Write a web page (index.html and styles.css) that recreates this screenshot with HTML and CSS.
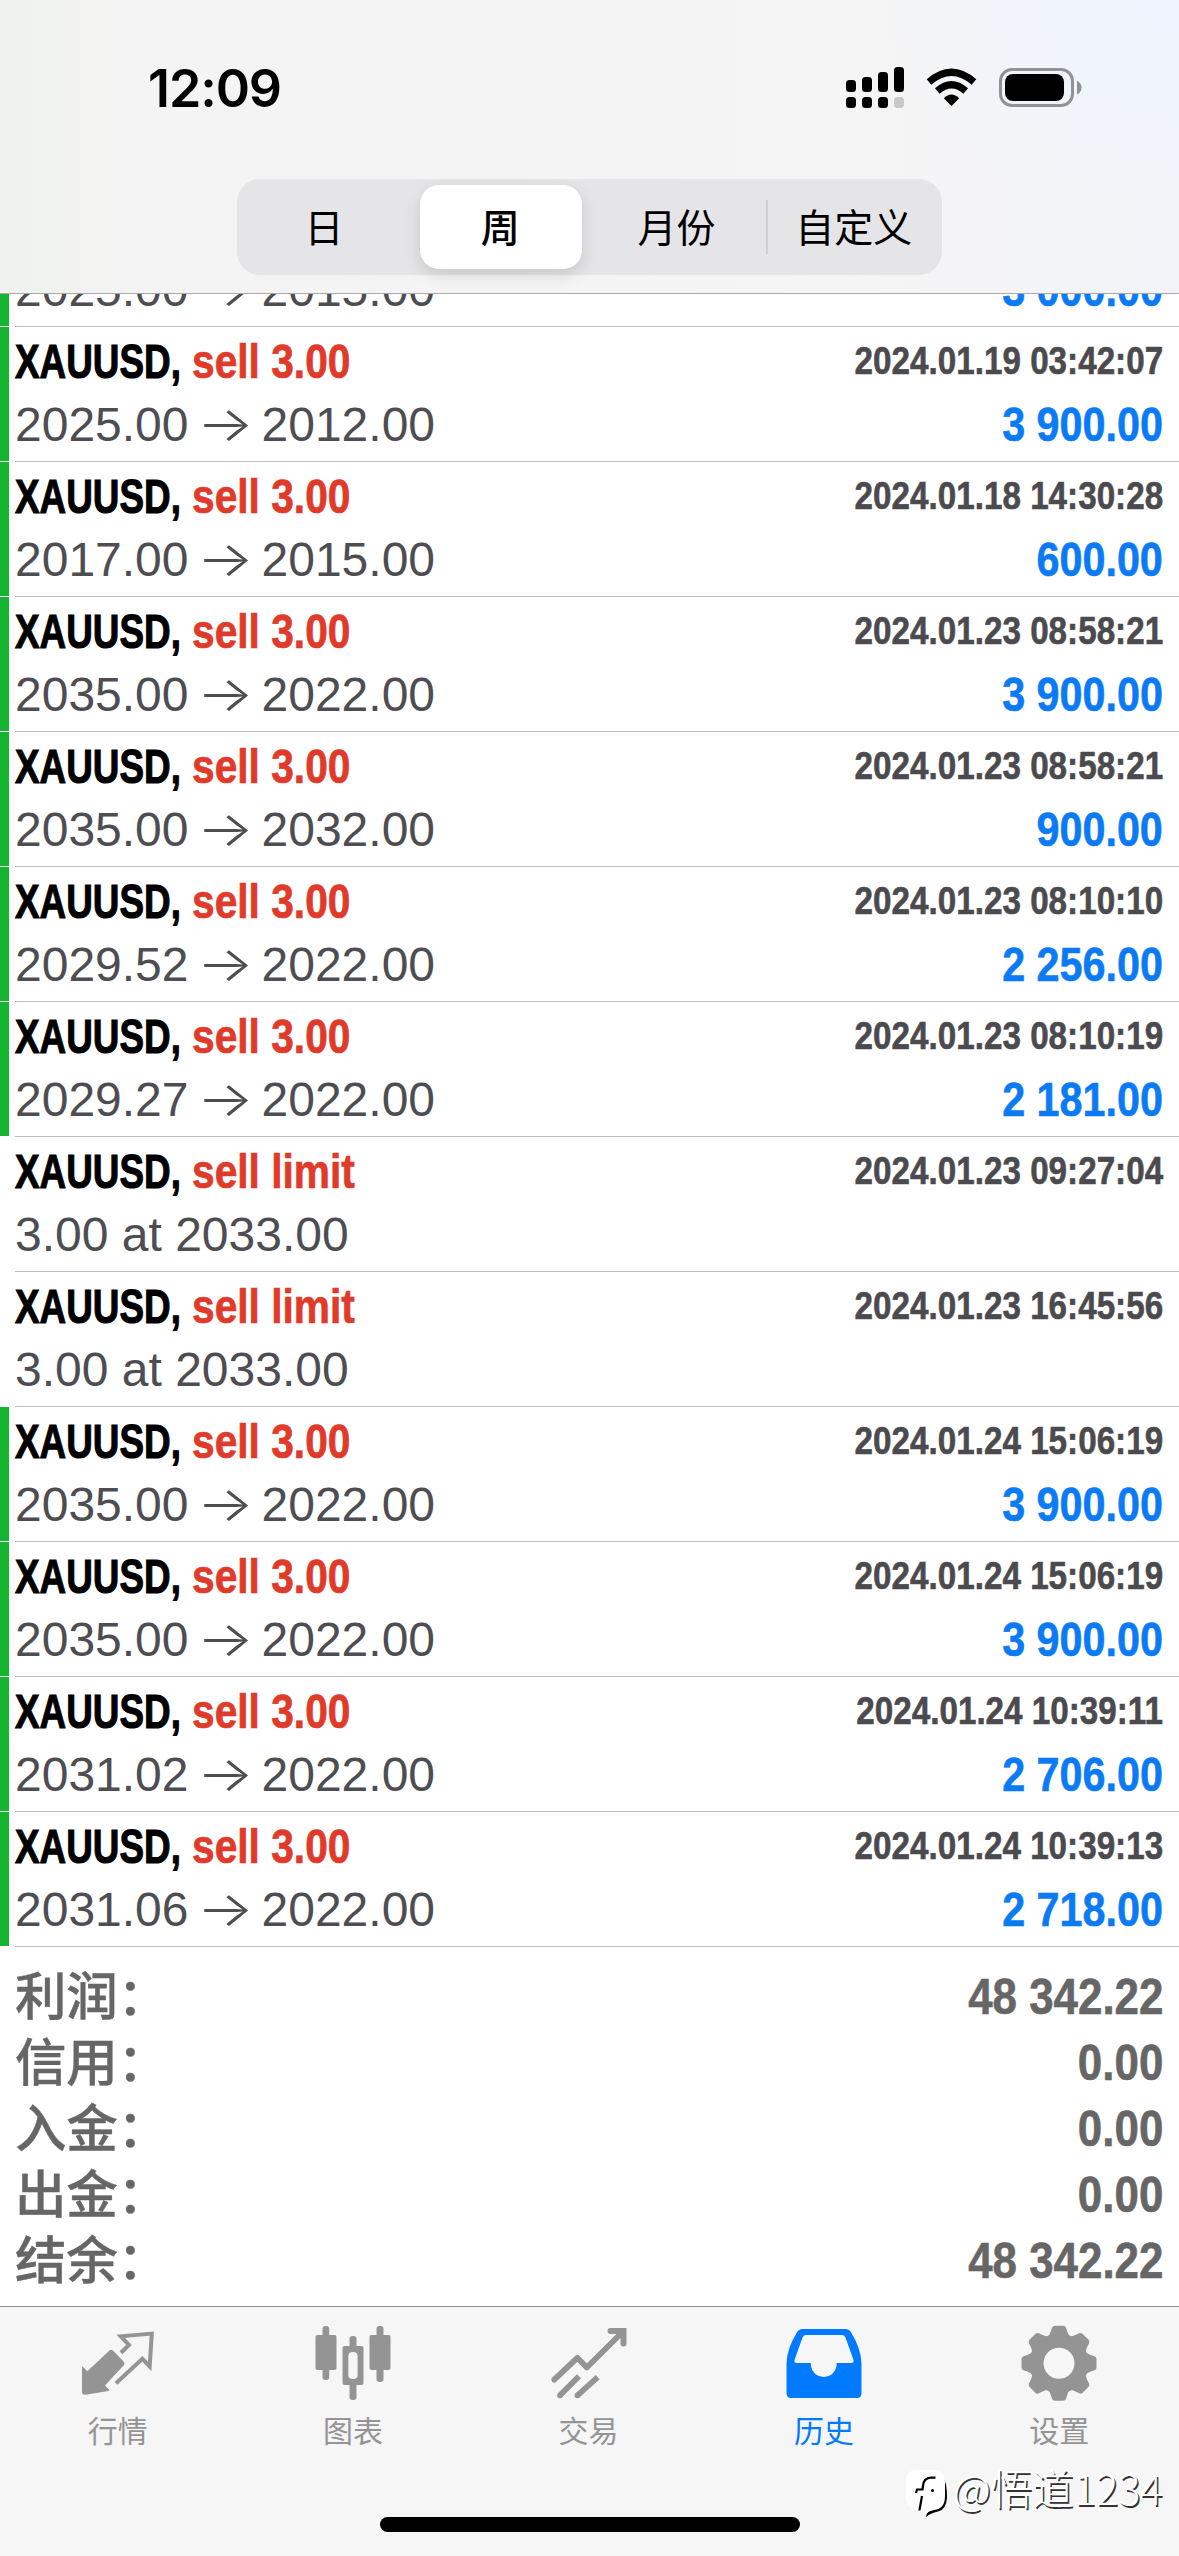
FILE: index.html
```html
<!DOCTYPE html>
<html lang="zh-CN">
<head>
<meta charset="utf-8">
<title>历史</title>
<link rel="stylesheet" href="styles.css">
</head>
<body>
<div class="screen">
  <header class="header">
    <div class="status">
      <span class="clock">12:09</span>
      <svg class="status-icons" width="240" height="50" viewBox="843 62 240 50">
        <g fill="#000">
          <rect x="846" y="80" width="10" height="12" rx="3.5"/>
          <rect x="862" y="77" width="10" height="15" rx="3.5"/>
          <rect x="878" y="72" width="10" height="20" rx="3.5"/>
          <rect x="894" y="67" width="10" height="25" rx="3.5"/>
          <rect x="846" y="97" width="10" height="11" rx="3.5"/>
          <rect x="862" y="97" width="10" height="11" rx="3.5"/>
          <rect x="878" y="97" width="10" height="11" rx="3.5"/>
          <path d="M951.500 106 L943.800 98.300 Q951.500 90.800 959.200 98.300 Z"/>
        </g>
        <rect x="894" y="97" width="10" height="11" rx="3.500" fill="#c8c8ca"/>
        <g fill="none" stroke="#000" stroke-width="7">
          <path d="M929 82 Q951.500 62.500 974 82"/>
          <path d="M937.300 91 Q951.500 78.500 965.700 91"/>
        </g>
        <rect x="1000.500" y="69.500" width="72" height="36" rx="11.500" fill="none" stroke="#929296" stroke-width="3"/>
        <rect x="1005" y="74" width="59" height="27" rx="8" fill="#000"/>
        <path d="M1077 80.500 q4.500 2.500 4.500 7 t-4.500 7 z" fill="#929296"/>
      </svg>
    </div>
    <nav class="segments">
      <span class="segment">日</span>
      <span class="segment selected">周</span>
      <span class="segment">月份</span>
      <span class="segment divided">自定义</span>
    </nav>
  </header>

  <main class="list">
    <div class="row filled clipped"><div class="cell">
      <div class="line second"><span class="price">2025.00<i class="arrow">→</i>2015.00</span><b class="profit">3 000.00</b></div>
    </div></div>
    <div class="row filled"><div class="cell">
      <div class="line"><b class="name">XAUUSD,</b><b class="side">sell 3.00</b><b class="date">2024.01.19 03:42:07</b></div>
      <div class="line second"><span class="price">2025.00<i class="arrow">→</i>2012.00</span><b class="profit">3 900.00</b></div>
    </div></div>
    <div class="row filled"><div class="cell">
      <div class="line"><b class="name">XAUUSD,</b><b class="side">sell 3.00</b><b class="date">2024.01.18 14:30:28</b></div>
      <div class="line second"><span class="price">2017.00<i class="arrow">→</i>2015.00</span><b class="profit">600.00</b></div>
    </div></div>
    <div class="row filled"><div class="cell">
      <div class="line"><b class="name">XAUUSD,</b><b class="side">sell 3.00</b><b class="date">2024.01.23 08:58:21</b></div>
      <div class="line second"><span class="price">2035.00<i class="arrow">→</i>2022.00</span><b class="profit">3 900.00</b></div>
    </div></div>
    <div class="row filled"><div class="cell">
      <div class="line"><b class="name">XAUUSD,</b><b class="side">sell 3.00</b><b class="date">2024.01.23 08:58:21</b></div>
      <div class="line second"><span class="price">2035.00<i class="arrow">→</i>2032.00</span><b class="profit">900.00</b></div>
    </div></div>
    <div class="row filled"><div class="cell">
      <div class="line"><b class="name">XAUUSD,</b><b class="side">sell 3.00</b><b class="date">2024.01.23 08:10:10</b></div>
      <div class="line second"><span class="price">2029.52<i class="arrow">→</i>2022.00</span><b class="profit">2 256.00</b></div>
    </div></div>
    <div class="row filled"><div class="cell">
      <div class="line"><b class="name">XAUUSD,</b><b class="side">sell 3.00</b><b class="date">2024.01.23 08:10:19</b></div>
      <div class="line second"><span class="price">2029.27<i class="arrow">→</i>2022.00</span><b class="profit">2 181.00</b></div>
    </div></div>
    <div class="row"><div class="cell">
      <div class="line"><b class="name">XAUUSD,</b><b class="side">sell limit</b><b class="date">2024.01.23 09:27:04</b></div>
      <div class="line second"><span class="price">3.00 at 2033.00</span></div>
    </div></div>
    <div class="row"><div class="cell">
      <div class="line"><b class="name">XAUUSD,</b><b class="side">sell limit</b><b class="date">2024.01.23 16:45:56</b></div>
      <div class="line second"><span class="price">3.00 at 2033.00</span></div>
    </div></div>
    <div class="row filled"><div class="cell">
      <div class="line"><b class="name">XAUUSD,</b><b class="side">sell 3.00</b><b class="date">2024.01.24 15:06:19</b></div>
      <div class="line second"><span class="price">2035.00<i class="arrow">→</i>2022.00</span><b class="profit">3 900.00</b></div>
    </div></div>
    <div class="row filled"><div class="cell">
      <div class="line"><b class="name">XAUUSD,</b><b class="side">sell 3.00</b><b class="date">2024.01.24 15:06:19</b></div>
      <div class="line second"><span class="price">2035.00<i class="arrow">→</i>2022.00</span><b class="profit">3 900.00</b></div>
    </div></div>
    <div class="row filled"><div class="cell">
      <div class="line"><b class="name">XAUUSD,</b><b class="side">sell 3.00</b><b class="date">2024.01.24 10:39:11</b></div>
      <div class="line second"><span class="price">2031.02<i class="arrow">→</i>2022.00</span><b class="profit">2 706.00</b></div>
    </div></div>
    <div class="row filled"><div class="cell">
      <div class="line"><b class="name">XAUUSD,</b><b class="side">sell 3.00</b><b class="date">2024.01.24 10:39:13</b></div>
      <div class="line second"><span class="price">2031.06<i class="arrow">→</i>2022.00</span><b class="profit">2 718.00</b></div>
    </div></div>
  </main>

  <section class="summary">
    <div class="total"><span class="label">利润：</span><b class="amount">48 342.22</b></div>
    <div class="total"><span class="label">信用：</span><b class="amount">0.00</b></div>
    <div class="total"><span class="label">入金：</span><b class="amount">0.00</b></div>
    <div class="total"><span class="label">出金：</span><b class="amount">0.00</b></div>
    <div class="total"><span class="label">结余：</span><b class="amount">48 342.22</b></div>
  </section>

  <footer class="footer">
    <nav class="tabs">
      <div class="tab">
        <svg width="100" height="82" viewBox="0 0 100 82">
          <path fill="currentColor" d="M14 46 L19.300 51.300 L41.500 30.500 Q43.300 29 45 30.600 L55.800 41.800 Q57.200 43.500 55.800 45.200 L37 65.500 L41.500 70 Q41 71 39 71.300 L17.500 74.700 Q14 75 14 72 Z"/>
          <path fill="none" stroke="currentColor" stroke-width="4" d="M53 32.700 L61 24.900 L52.800 16.300 L83.800 13.600 L81.700 46.500 L74.400 38.800 L48 63.200"/>
        </svg>
        <span>行情</span>
      </div>
      <div class="tab">
        <svg width="100" height="82" viewBox="0 0 100 82" fill="currentColor">
          <rect x="19.500" y="6" width="6.700" height="54" rx="3"/>
          <rect x="12.500" y="15" width="21" height="35" rx="2"/>
          <rect x="73.500" y="6" width="7" height="56" rx="3"/>
          <rect x="66.500" y="15" width="21" height="35" rx="2"/>
          <rect x="46.500" y="16" width="7" height="14" rx="3"/>
          <rect x="46.500" y="61" width="7" height="19" rx="3"/>
          <path fill-rule="evenodd" d="M41.500 26 H58.500 Q60.500 26 60.500 28 V63 Q60.500 65 58.500 65 H41.500 Q39.500 65 39.500 63 V28 Q39.500 26 41.500 26 Z M45.300 36 V55 Q45.300 59 50 59 Q54.600 59 54.600 55 V36 Q54.600 32 50 32 Q45.300 32 45.300 36 Z"/>
        </svg>
        <span>图表</span>
      </div>
      <div class="tab">
        <svg width="100" height="82" viewBox="0 0 100 82" fill="none" stroke="currentColor">
          <g stroke-width="5.800" stroke-linejoin="round">
            <path stroke-linecap="round" d="M15.300 59.700 L38.300 37.800 L47.800 47.500 L83 12.500"/>
            <path d="M21 75.300 L40 56.300 M38.500 75.300 L58.700 57.200"/>
          </g>
          <g fill="currentColor" stroke="none"><circle cx="21" cy="75.300" r="2.900"/><circle cx="38.500" cy="75.300" r="2.900"/></g>
          <path stroke-width="6" stroke-linecap="round" d="M71.500 11 H84.500 V23.500"/>
        </svg>
        <span>交易</span>
      </div>
      <div class="tab active">
        <svg width="100" height="82" viewBox="0 0 100 82">
          <path fill="currentColor" fill-rule="evenodd" d="M28 9 H72 Q75 9 76.600 11.500 Q87.500 29 87.500 44 V73 Q87.500 78 83 78 H17 Q12.500 78 12.500 73 V44 Q12.500 29 23.400 11.500 Q25 9 28 9 Z M31.500 15 Q29.500 15 28.500 17.500 L20.500 40 Q20 43 22.500 43 H36.900 V46 A13 13 0 0 0 62.600 46 V43 H77.500 Q80 43 79.500 40 L71.500 17.500 Q70.500 15 68.500 15 Z"/>
        </svg>
        <span>历史</span>
      </div>
      <div class="tab">
        <svg width="100" height="82" viewBox="0 0 100 82">
          <defs><path id="tooth" d="M-12 -26 Q-9.500 -28 -8.500 -31 L-7 -35.500 Q-6.300 -37.500 -4 -37.500 H4 Q6.300 -37.500 7 -35.500 L8.500 -31 Q9.500 -28 12 -26 Z"/></defs>
          <g transform="translate(50 43.300)" fill="currentColor">
            <circle r="22.500" fill="none" stroke="currentColor" stroke-width="14"/>
            <use href="#tooth"/>
            <use href="#tooth" transform="rotate(45)"/>
            <use href="#tooth" transform="rotate(90)"/>
            <use href="#tooth" transform="rotate(135)"/>
            <use href="#tooth" transform="rotate(180)"/>
            <use href="#tooth" transform="rotate(225)"/>
            <use href="#tooth" transform="rotate(270)"/>
            <use href="#tooth" transform="rotate(315)"/>
          </g>
        </svg>
        <span>设置</span>
      </div>
    </nav>
    <div class="home-bar"></div>
  </footer>

  <div class="watermark">
    <svg width="46" height="52" viewBox="0 0 46 52">
      <path fill="#000" d="M39 9 Q43 14 43 30 Q42 42 34 43.500 Q26 45 22 49 Q23 42 30 40 Z M7 38 L15.500 43 L16 38 Z"/>
      <path fill="#fff" d="M13 2 H30 Q41 2 41 14 V28 Q41 41 30 42 Q25 43 21 46 L22 42 H13 Q2 41 2 29 V14 Q2 2 13 2 Z"/>
      <path fill="none" stroke="#000" stroke-width="2.200" d="M31.500 9.700 H27 Q19.500 10 19 18 L18.500 21.500 H13 L12 25 M18 28 L15.500 42"/>
      <circle cx="28.500" cy="22.500" r="1.500" fill="#000"/>
    </svg>
    <span>@悟道1234</span>
  </div>
</div>
</body>
</html>
```
FILE: styles.css
```css
* { box-sizing: border-box; }

body {
  margin: 0;
  background: #fff;
  font-family: "Liberation Sans", "Noto Sans CJK SC", sans-serif;
}

.screen {
  position: relative;
  display: flex;
  flex-direction: column;
  width: 1179px;
  height: 2556px;
  overflow: hidden;
}

/* Header */
.header {
  height: 294px;
  flex: none;
  border-bottom: 1px solid #a9a9ab;
  background:
    radial-gradient(ellipse 300px 220px at 100% 0, #eef4fe, rgba(242, 244, 250, 0)),
    linear-gradient(90deg, #f0f2ef 0, #f4f4f4 16%, #f5f5f5 72%, #f3f4f9 100%);
}

.status {
  display: flex;
  justify-content: space-between;
  align-items: center;
  height: 179px;
  padding: 0 96px 5px 148px;
}

.clock {
  padding-top: 4px;
  font: 600 52px/60px Inter, sans-serif;
  letter-spacing: -1.1px;
}

.segments {
  display: grid;
  grid-template-columns: repeat(4, 1fr);
  width: 705px;
  height: 96px;
  margin: 0 auto;
  padding: 6px 0;
  border-radius: 23px;
  background: #e5e4e6;
}

.segment {
  position: relative;
  display: flex;
  align-items: center;
  justify-content: center;
  padding: 0 2px 5px 0;
  font: 400 39px/54px "Noto Sans CJK SC", sans-serif;
}

.selected {
  width: 162px;
  justify-self: center;
  border-radius: 19px;
  background: #fff;
  box-shadow: 0 6px 16px rgba(0, 0, 0, .13);
  font-weight: 500;
}

.divided {
  padding-right: 0;
}

.divided::before {
  content: "";
  position: absolute;
  left: 0;
  top: 15px;
  width: 2px;
  height: 54px;
  background: #cfced1;
}

/* Deals */
.row {
  display: flex;
  height: 135px;
  padding-left: 15px;
}

.filled {
  padding-left: 0;
}

.filled::before {
  content: "";
  width: 9px;
  height: 134px;
  margin-right: 6px;
  background: #16b530;
}

.cell {
  flex: 1;
  border-bottom: 1px solid #bfbfc1;
  padding: 2px 16px 0 0;
}

.clipped {
  height: 33px;
  align-items: flex-end;
  overflow: hidden;
}

.clipped::before {
  margin-bottom: 1px;
}

.clipped .cell {
  padding-top: 0;
  padding-bottom: 3px;
}

.line {
  display: flex;
  height: 66px;
  font-size: 48px;
  line-height: 66px;
  white-space: nowrap;
}

.second {
  height: 66px;
  margin-top: -3px;
}

.name, .side {
  transform-origin: left;
  -webkit-text-stroke: .7px currentColor;
}

.name {
  width: 177px;
  color: #000;
  -webkit-text-stroke-width: 1.1px;
  transform: scaleX(.768);
}

.side {
  color: #e03a2b;
  transform: scaleX(.848);
}

.date, .profit, .amount {
  margin-left: auto;
  transform-origin: right;
  -webkit-text-stroke: .6px currentColor;
}

.date {
  color: #4b4a4e;
  font-size: 39px;
  line-height: 64px;
  transform: scaleX(.852);
}

.profit {
  color: #0a7af5;
  transform: scaleX(.86);
}

.price {
  color: #4e4d51;
}

.arrow {
  display: inline-block;
  width: 73px;
  font: 300 48px/50px Inter, sans-serif;
  text-align: center;
  transform: scaleX(1.25);
}

/* Totals */
.summary {
  flex: 1;
  padding: 17px 16px 0 15px;
  color: #666;
}

.total {
  display: flex;
  height: 66px;
  line-height: 66px;
}

.label {
  font: 500 51.500px/58px "Noto Sans CJK SC", sans-serif;
  letter-spacing: -.3px;
  -webkit-text-stroke: .4px currentColor;
}

.amount {
  font-size: 50px;
  transform: scaleX(.878);
}

/* Tabs */
.footer {
  flex: none;
  height: 250px;
  border-top: 1px solid #8e8e90;
  background: #f6f6f6;
}

.tabs {
  display: flex;
  height: 210px;
  padding: 13px 2px 0 0;
}

.tab {
  display: flex;
  flex: 1;
  flex-direction: column;
  align-items: center;
  color: #949494;
  font: 400 30px/44px "Noto Sans CJK SC", sans-serif;
}

.tab span {
  margin-top: 5px;
}

.active {
  color: #007aff;
}

.home-bar {
  width: 420px;
  height: 15px;
  margin: 0 auto;
  border-radius: 8px;
  background: #000;
}

.watermark {
  position: absolute;
  left: 904px;
  top: 2460px;
  display: flex;
  align-items: flex-start;
  gap: 3px;
  color: #fff;
  font: 300 41.500px/54px "Noto Sans CJK SC", sans-serif;
  text-shadow: 1.500px 1.500px 0 #333;
  white-space: nowrap;
}

.watermark svg {
  margin-top: 8px;
}
```
